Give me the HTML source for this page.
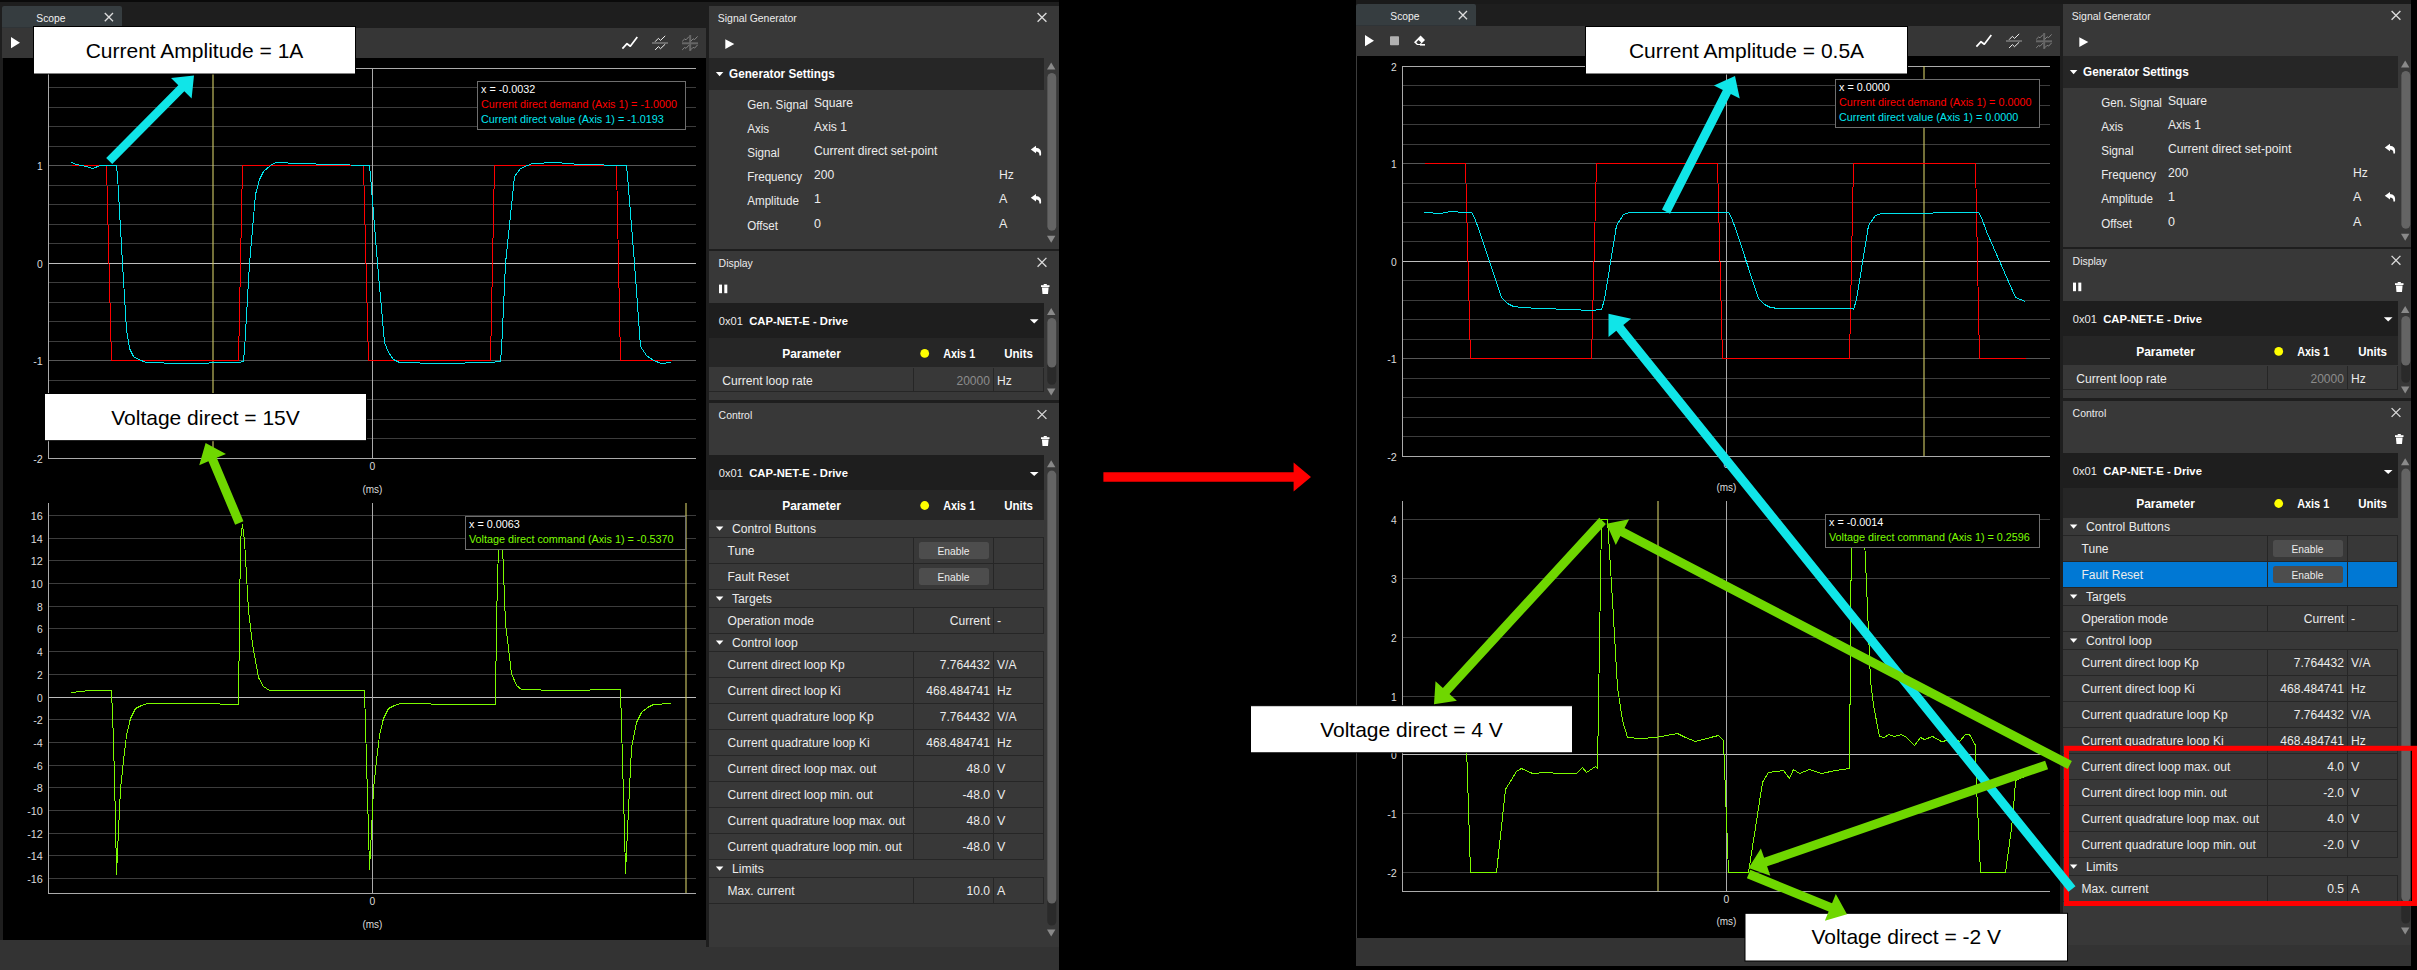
<!DOCTYPE html>
<html><head><meta charset="utf-8"><style>
html,body{margin:0;padding:0;background:#000;overflow:hidden;width:2417px;height:970px;}
svg{display:block;} svg text{font-family:"Liberation Sans", sans-serif;}
</style></head><body>
<svg width="2417" height="970" viewBox="0 0 2417 970">
<rect x="0" y="0" width="2417" height="970" fill="#000"/>
<rect x="0" y="0" width="1059" height="970" fill="#1e1e1e" />
<rect x="0" y="0" width="1059" height="2" fill="#0a0a0a" />
<path d="M2,27.7 L2,8 Q2,6 4,6 L120,6 Q122,6 122,8 L122,27.7 Z" fill="#363d40"/>
<text x="36.3" y="22" font-size="11.2" fill="#f0f0f0" textLength="29.18" lengthAdjust="spacingAndGlyphs" >Scope</text>
<line x1="104.8" y1="13" x2="113" y2="21.2" stroke="#dcdcdc" stroke-width="1.3" />
<line x1="113" y1="13" x2="104.8" y2="21.2" stroke="#dcdcdc" stroke-width="1.3" />
<rect x="2" y="28" width="704" height="30" fill="#363636" />
<polygon points="11,37 20,42.65 11,48.3" fill="#ffffff" />
<polyline points="622.4,48.7 627,43.7 630.3,46.2 637.3,36.9" fill="none" stroke="#ffffff" stroke-width="1.7" stroke-linejoin="round" />
<rect x="652" y="42" width="16" height="2" fill="#6a6a6a" />
<polyline points="655.1,41.7 658.4,38.3 660.5,40.4 665.2,35.9" fill="none" stroke="#f0f0f0" stroke-width="1.0" stroke-linejoin="round" />
<polyline points="655.1,50 658.4,46.6 660.5,48.7 665.2,44.2" fill="none" stroke="#f0f0f0" stroke-width="1.0" stroke-linejoin="round" />
<rect x="682" y="42.3" width="16" height="2" fill="#666666" />
<rect x="689.2" y="35" width="2" height="16" fill="#666666" />
<polyline points="682.2,41.4 684.6,39 686,39.8 689,36.6" fill="none" stroke="#8c8c8c" stroke-width="0.9" stroke-linejoin="round" />
<polyline points="690.8,41.2 693.2,38.8 694.6,39.6 697.6,36.4" fill="none" stroke="#8c8c8c" stroke-width="0.9" stroke-linejoin="round" />
<polyline points="682.2,49.9 684.6,47.5 686,48.3 689,45.1" fill="none" stroke="#8c8c8c" stroke-width="0.9" stroke-linejoin="round" />
<polyline points="690.8,49.7 693.2,47.3 694.6,48.1 697.6,44.9" fill="none" stroke="#8c8c8c" stroke-width="0.9" stroke-linejoin="round" />
<rect x="3" y="58" width="703" height="882" fill="#000000" />
<rect x="0" y="940" width="706" height="30" fill="#333333" />
<rect x="706" y="947" width="353" height="23" fill="#333333" />
<line x1="48" y1="458.5" x2="696" y2="458.5" stroke="#aaaaaa" stroke-width="1" shape-rendering="crispEdges"/>
<line x1="48" y1="438.5" x2="696" y2="438.5" stroke="#3c3c3c" stroke-width="1" shape-rendering="crispEdges"/>
<line x1="48" y1="419.5" x2="696" y2="419.5" stroke="#3c3c3c" stroke-width="1" shape-rendering="crispEdges"/>
<line x1="48" y1="399.5" x2="696" y2="399.5" stroke="#3c3c3c" stroke-width="1" shape-rendering="crispEdges"/>
<line x1="48" y1="380.5" x2="696" y2="380.5" stroke="#3c3c3c" stroke-width="1" shape-rendering="crispEdges"/>
<line x1="48" y1="360.5" x2="696" y2="360.5" stroke="#575757" stroke-width="1" shape-rendering="crispEdges"/>
<line x1="48" y1="341.5" x2="696" y2="341.5" stroke="#3c3c3c" stroke-width="1" shape-rendering="crispEdges"/>
<line x1="48" y1="321.5" x2="696" y2="321.5" stroke="#3c3c3c" stroke-width="1" shape-rendering="crispEdges"/>
<line x1="48" y1="302.5" x2="696" y2="302.5" stroke="#3c3c3c" stroke-width="1" shape-rendering="crispEdges"/>
<line x1="48" y1="282.5" x2="696" y2="282.5" stroke="#3c3c3c" stroke-width="1" shape-rendering="crispEdges"/>
<line x1="48" y1="263.5" x2="696" y2="263.5" stroke="#bdbdbd" stroke-width="1" shape-rendering="crispEdges"/>
<line x1="48" y1="243.5" x2="696" y2="243.5" stroke="#3c3c3c" stroke-width="1" shape-rendering="crispEdges"/>
<line x1="48" y1="224.5" x2="696" y2="224.5" stroke="#3c3c3c" stroke-width="1" shape-rendering="crispEdges"/>
<line x1="48" y1="204.5" x2="696" y2="204.5" stroke="#3c3c3c" stroke-width="1" shape-rendering="crispEdges"/>
<line x1="48" y1="185.5" x2="696" y2="185.5" stroke="#3c3c3c" stroke-width="1" shape-rendering="crispEdges"/>
<line x1="48" y1="165.5" x2="696" y2="165.5" stroke="#575757" stroke-width="1" shape-rendering="crispEdges"/>
<line x1="48" y1="146.5" x2="696" y2="146.5" stroke="#3c3c3c" stroke-width="1" shape-rendering="crispEdges"/>
<line x1="48" y1="126.5" x2="696" y2="126.5" stroke="#3c3c3c" stroke-width="1" shape-rendering="crispEdges"/>
<line x1="48" y1="107.5" x2="696" y2="107.5" stroke="#3c3c3c" stroke-width="1" shape-rendering="crispEdges"/>
<line x1="48" y1="87.5" x2="696" y2="87.5" stroke="#3c3c3c" stroke-width="1" shape-rendering="crispEdges"/>
<line x1="48" y1="68.5" x2="696" y2="68.5" stroke="#aaaaaa" stroke-width="1" shape-rendering="crispEdges"/>
<line x1="48.5" y1="68" x2="48.5" y2="459" stroke="#aaaaaa" stroke-width="1" shape-rendering="crispEdges"/>
<line x1="372.5" y1="68" x2="372.5" y2="458" stroke="#aaaaaa" stroke-width="1" shape-rendering="crispEdges"/>
<rect x="212" y="68" width="2" height="390" fill="rgba(211,205,103,0.545)"/>
<text x="42.8" y="73" font-size="10.3" fill="#dcdcdc" text-anchor="end" >2</text>
<text x="42.8" y="170" font-size="10.3" fill="#dcdcdc" text-anchor="end" >1</text>
<text x="42.8" y="268" font-size="10.3" fill="#dcdcdc" text-anchor="end" >0</text>
<text x="42.8" y="365" font-size="10.3" fill="#dcdcdc" text-anchor="end" textLength="9.61" lengthAdjust="spacingAndGlyphs" >-1</text>
<text x="42.8" y="463" font-size="10.3" fill="#dcdcdc" text-anchor="end" textLength="9.61" lengthAdjust="spacingAndGlyphs" >-2</text>
<text x="372.4" y="470" font-size="10.3" fill="#dcdcdc" text-anchor="middle" >0</text>
<text x="372.4" y="493" font-size="10.3" fill="#dcdcdc" text-anchor="middle" textLength="19.96" lengthAdjust="spacingAndGlyphs" >(ms)</text>
<polyline points="71.5,165.5 106.5,165.5 111.5,360.5 238.5,360.5 242.5,165.5 363.5,165.5 368.5,360.5 490.5,360.5 494.5,165.5 616.5,165.5 620.5,360.5 671.5,360.5" fill="none" stroke="#ff0000" stroke-width="1" shape-rendering="crispEdges"/>
<polyline points="71.5,162.5 76.5,164.5 86.5,166.5 92.5,168.5 100.5,165.5 116.5,165.5 116.5,165.5 117.5,175.5 122.5,263.5 126.5,329.5 129.5,348.5 133.5,356.5 138.5,359.5 146.5,362.5 180.5,363.5 238.5,362.5 243.5,361.5 243.5,360.5 244.5,350.5 249.5,263.5 255.5,194.5 259.5,179.5 263.5,171.5 270.5,165.5 275.5,162.5 300.5,163.5 330.5,164.5 369.5,165.5 369.5,165.5 370.5,175.5 377.5,263.5 384.5,342.5 388.5,352.5 393.5,359.5 399.5,362.5 440.5,363.5 490.5,362.5 500.5,361.5 500.5,360.5 501.5,350.5 505.5,263.5 514.5,176.5 520.5,168.5 527.5,165.5 532.5,163.5 555.5,162.5 580.5,164.5 626.5,165.5 626.5,165.5 627.5,175.5 634.5,263.5 640.5,346.5 646.5,355.5 653.5,360.5 661.5,363.5 671.5,362.5" fill="none" stroke="#00e5ee" stroke-width="1" shape-rendering="crispEdges"/>
<rect x="477.5" y="81.5" width="208" height="48" fill="#000" stroke="#6e6e6e" stroke-width="1"/>
<text x="481" y="93" font-size="10.2" fill="#ffffff" textLength="54.36" lengthAdjust="spacingAndGlyphs" >x = -0.0032</text>
<text x="481" y="108" font-size="10.2" fill="#ff0000" textLength="196.05" lengthAdjust="spacingAndGlyphs" >Current direct demand (Axis 1) = -1.0000</text>
<text x="481" y="123" font-size="10.2" fill="#00e5ee" textLength="182.83" lengthAdjust="spacingAndGlyphs" >Current direct value (Axis 1) = -1.0193</text>
<line x1="48" y1="515.5" x2="696" y2="515.5" stroke="#3c3c3c" stroke-width="1" shape-rendering="crispEdges"/>
<text x="42.8" y="520" font-size="10.3" fill="#dcdcdc" text-anchor="end" textLength="12.04" lengthAdjust="spacingAndGlyphs" >16</text>
<line x1="48" y1="538.5" x2="696" y2="538.5" stroke="#3c3c3c" stroke-width="1" shape-rendering="crispEdges"/>
<text x="42.8" y="543" font-size="10.3" fill="#dcdcdc" text-anchor="end" textLength="12.04" lengthAdjust="spacingAndGlyphs" >14</text>
<line x1="48" y1="560.5" x2="696" y2="560.5" stroke="#3c3c3c" stroke-width="1" shape-rendering="crispEdges"/>
<text x="42.8" y="565" font-size="10.3" fill="#dcdcdc" text-anchor="end" textLength="12.04" lengthAdjust="spacingAndGlyphs" >12</text>
<line x1="48" y1="583.5" x2="696" y2="583.5" stroke="#3c3c3c" stroke-width="1" shape-rendering="crispEdges"/>
<text x="42.8" y="588" font-size="10.3" fill="#dcdcdc" text-anchor="end" textLength="12.04" lengthAdjust="spacingAndGlyphs" >10</text>
<line x1="48" y1="606.5" x2="696" y2="606.5" stroke="#3c3c3c" stroke-width="1" shape-rendering="crispEdges"/>
<text x="42.8" y="611" font-size="10.3" fill="#dcdcdc" text-anchor="end" >8</text>
<line x1="48" y1="628.5" x2="696" y2="628.5" stroke="#3c3c3c" stroke-width="1" shape-rendering="crispEdges"/>
<text x="42.8" y="633" font-size="10.3" fill="#dcdcdc" text-anchor="end" >6</text>
<line x1="48" y1="651.5" x2="696" y2="651.5" stroke="#3c3c3c" stroke-width="1" shape-rendering="crispEdges"/>
<text x="42.8" y="656" font-size="10.3" fill="#dcdcdc" text-anchor="end" >4</text>
<line x1="48" y1="674.5" x2="696" y2="674.5" stroke="#3c3c3c" stroke-width="1" shape-rendering="crispEdges"/>
<text x="42.8" y="679" font-size="10.3" fill="#dcdcdc" text-anchor="end" >2</text>
<line x1="48" y1="697.5" x2="696" y2="697.5" stroke="#bdbdbd" stroke-width="1" shape-rendering="crispEdges"/>
<text x="42.8" y="702" font-size="10.3" fill="#dcdcdc" text-anchor="end" >0</text>
<line x1="48" y1="719.5" x2="696" y2="719.5" stroke="#3c3c3c" stroke-width="1" shape-rendering="crispEdges"/>
<text x="42.8" y="724" font-size="10.3" fill="#dcdcdc" text-anchor="end" textLength="9.61" lengthAdjust="spacingAndGlyphs" >-2</text>
<line x1="48" y1="742.5" x2="696" y2="742.5" stroke="#3c3c3c" stroke-width="1" shape-rendering="crispEdges"/>
<text x="42.8" y="747" font-size="10.3" fill="#dcdcdc" text-anchor="end" textLength="9.61" lengthAdjust="spacingAndGlyphs" >-4</text>
<line x1="48" y1="765.5" x2="696" y2="765.5" stroke="#3c3c3c" stroke-width="1" shape-rendering="crispEdges"/>
<text x="42.8" y="770" font-size="10.3" fill="#dcdcdc" text-anchor="end" textLength="9.61" lengthAdjust="spacingAndGlyphs" >-6</text>
<line x1="48" y1="787.5" x2="696" y2="787.5" stroke="#3c3c3c" stroke-width="1" shape-rendering="crispEdges"/>
<text x="42.8" y="792" font-size="10.3" fill="#dcdcdc" text-anchor="end" textLength="9.61" lengthAdjust="spacingAndGlyphs" >-8</text>
<line x1="48" y1="810.5" x2="696" y2="810.5" stroke="#3c3c3c" stroke-width="1" shape-rendering="crispEdges"/>
<text x="42.8" y="815" font-size="10.3" fill="#dcdcdc" text-anchor="end" textLength="15.64" lengthAdjust="spacingAndGlyphs" >-10</text>
<line x1="48" y1="833.5" x2="696" y2="833.5" stroke="#3c3c3c" stroke-width="1" shape-rendering="crispEdges"/>
<text x="42.8" y="838" font-size="10.3" fill="#dcdcdc" text-anchor="end" textLength="15.64" lengthAdjust="spacingAndGlyphs" >-12</text>
<line x1="48" y1="855.5" x2="696" y2="855.5" stroke="#3c3c3c" stroke-width="1" shape-rendering="crispEdges"/>
<text x="42.8" y="860" font-size="10.3" fill="#dcdcdc" text-anchor="end" textLength="15.64" lengthAdjust="spacingAndGlyphs" >-14</text>
<line x1="48" y1="878.5" x2="696" y2="878.5" stroke="#3c3c3c" stroke-width="1" shape-rendering="crispEdges"/>
<text x="42.8" y="883" font-size="10.3" fill="#dcdcdc" text-anchor="end" textLength="15.64" lengthAdjust="spacingAndGlyphs" >-16</text>
<line x1="48.5" y1="503" x2="48.5" y2="894" stroke="#aaaaaa" stroke-width="1" shape-rendering="crispEdges"/>
<line x1="48" y1="893.5" x2="696" y2="893.5" stroke="#aaaaaa" stroke-width="1" shape-rendering="crispEdges"/>
<line x1="372.5" y1="503" x2="372.5" y2="893" stroke="#aaaaaa" stroke-width="1" shape-rendering="crispEdges"/>
<rect x="685" y="503" width="2" height="390" fill="rgba(211,205,103,0.545)"/>
<text x="372.4" y="905.4" font-size="10.3" fill="#dcdcdc" text-anchor="middle" >0</text>
<text x="372.4" y="928" font-size="10.3" fill="#dcdcdc" text-anchor="middle" textLength="19.96" lengthAdjust="spacingAndGlyphs" >(ms)</text>
<polyline points="71.5,692.5 80.5,691.5 89.5,690.5 111.5,690.5 113.5,740.5 115.5,820.5 116.5,874.5 118.5,830.5 120.5,789.5 123.5,760.5 126.5,735.5 130.5,718.5 135.5,708.5 141.5,705.5 147.5,703.5 200.5,703.5 238.5,704.5 239.5,620.5 240.5,540.5 242.5,524.5 244.5,540.5 248.5,610.5 252.5,644.5 258.5,677.5 263.5,686.5 269.5,690.5 300.5,690.5 364.5,690.5 366.5,760.5 368.5,830.5 369.5,869.5 371.5,830.5 373.5,789.5 376.5,760.5 379.5,735.5 383.5,718.5 388.5,708.5 394.5,705.5 400.5,703.5 460.5,704.5 495.5,704.5 496.5,620.5 498.5,545.5 500.5,528.5 502.5,545.5 505.5,623.5 511.5,673.5 516.5,685.5 521.5,689.5 560.5,690.5 620.5,689.5 622.5,760.5 624.5,830.5 625.5,873.5 627.5,830.5 631.5,747.5 636.5,722.5 641.5,712.5 647.5,707.5 653.5,704.5 671.5,703.5" fill="none" stroke="#7cfc00" stroke-width="1" shape-rendering="crispEdges"/>
<rect x="465.5" y="516.5" width="220" height="33" fill="#000" stroke="#6e6e6e" stroke-width="1"/>
<text x="469" y="528" font-size="10.2" fill="#ffffff" textLength="50.76" lengthAdjust="spacingAndGlyphs" >x = 0.0063</text>
<text x="469" y="543" font-size="10.2" fill="#7cfc00" textLength="204.46" lengthAdjust="spacingAndGlyphs" >Voltage direct command (Axis 1) = -0.5370</text>
<rect x="709" y="6" width="350" height="243" fill="#383838" />
<text x="717.8" y="22" font-size="10.8" fill="#ececec" textLength="78.90" lengthAdjust="spacingAndGlyphs" >Signal Generator</text>
<line x1="1037.6" y1="13" x2="1046.4" y2="21.8" stroke="#dcdcdc" stroke-width="1.3" />
<line x1="1046.4" y1="13" x2="1037.6" y2="21.8" stroke="#dcdcdc" stroke-width="1.3" />
<polygon points="725.3,39.2 734.3,44.1 725.3,49" fill="#ffffff" />
<rect x="709" y="58" width="335" height="32" fill="#262626" />
<polygon points="715.85,72.1 723.35,72.1 719.6,76.3" fill="#ffffff" />
<text x="729" y="78" font-size="12.3" fill="#ffffff" font-weight="bold" textLength="105.75" lengthAdjust="spacingAndGlyphs" >Generator Settings</text>
<text x="747.2" y="109" font-size="12.5" fill="#ececec" textLength="60.76" lengthAdjust="spacingAndGlyphs" >Gen. Signal</text>
<text x="814" y="107" font-size="12.5" fill="#ececec" textLength="39.10" lengthAdjust="spacingAndGlyphs" >Square</text>
<text x="747.2" y="133.1" font-size="12.5" fill="#ececec" textLength="21.97" lengthAdjust="spacingAndGlyphs" >Axis</text>
<text x="814" y="131.1" font-size="12.5" fill="#ececec" textLength="33.03" lengthAdjust="spacingAndGlyphs" >Axis 1</text>
<text x="747.2" y="157.2" font-size="12.5" fill="#ececec" textLength="32.33" lengthAdjust="spacingAndGlyphs" >Signal</text>
<text x="814" y="155.2" font-size="12.5" fill="#ececec" textLength="123.30" lengthAdjust="spacingAndGlyphs" >Current direct set-point</text>
<polygon points="1030.8,149.5 1036,145.8 1036,153.2" fill="#ffffff" />
<path d="M1035.6,147.8 C1040,147.8 1041.8,150.6 1041,155.4 L1039.4,155.4 C1039.7,152.8 1038.4,151.4 1035.6,151.4 Z" fill="#ffffff"/>
<text x="747.2" y="181.3" font-size="12.5" fill="#ececec" textLength="54.93" lengthAdjust="spacingAndGlyphs" >Frequency</text>
<text x="814" y="179.3" font-size="12.5" fill="#ececec" textLength="20.23" lengthAdjust="spacingAndGlyphs" >200</text>
<text x="999" y="179.3" font-size="12.5" fill="#ececec" textLength="14.82" lengthAdjust="spacingAndGlyphs" >Hz</text>
<text x="747.2" y="205.4" font-size="12.5" fill="#ececec" textLength="51.70" lengthAdjust="spacingAndGlyphs" >Amplitude</text>
<text x="814" y="203.4" font-size="12.5" fill="#ececec" >1</text>
<text x="999" y="203.4" font-size="12.5" fill="#ececec" >A</text>
<polygon points="1030.8,197.7 1036,194 1036,201.4" fill="#ffffff" />
<path d="M1035.6,196 C1040,196 1041.8,198.8 1041,203.6 L1039.4,203.6 C1039.7,201 1038.4,199.6 1035.6,199.6 Z" fill="#ffffff"/>
<text x="747.2" y="229.5" font-size="12.5" fill="#ececec" textLength="30.79" lengthAdjust="spacingAndGlyphs" >Offset</text>
<text x="814" y="227.5" font-size="12.5" fill="#ececec" >0</text>
<text x="999" y="227.5" font-size="12.5" fill="#ececec" >A</text>
<polygon points="1047,69.4 1051.2,62.4 1055.4,69.4" fill="#8a8a8a" />
<rect x="1047.3" y="73" width="9" height="157.7" fill="#2a2a2a" rx="4.5"/>
<rect x="1047.3" y="73" width="9" height="157.7" fill="#646464" rx="4.5"/>
<polygon points="1047,235.8 1055.4,235.8 1051.2,242.8" fill="#8a8a8a" />
<rect x="709" y="251" width="350" height="149" fill="#383838" />
<text x="718.6" y="267.2" font-size="10.8" fill="#ececec" textLength="34.25" lengthAdjust="spacingAndGlyphs" >Display</text>
<line x1="1037.6" y1="257.9" x2="1046.4" y2="266.7" stroke="#dcdcdc" stroke-width="1.3" />
<line x1="1046.4" y1="257.9" x2="1037.6" y2="266.7" stroke="#dcdcdc" stroke-width="1.3" />
<rect x="719" y="284.6" width="3" height="8.6" fill="#ffffff" />
<rect x="724.3" y="284.6" width="3" height="8.6" fill="#ffffff" />
<rect x="1041" y="285.2" width="8.5" height="1.8" fill="#ffffff" />
<rect x="1043.7" y="284" width="3.1" height="1.6" fill="#ffffff" />
<polygon points="1041.9,287.6 1048.6,287.6 1048,294 1042.5,294" fill="#ffffff" />
<rect x="709" y="303" width="335" height="35" fill="#1e1e1e" />
<text x="718.8" y="324.5" font-size="11.3" fill="#ececec" textLength="24.01" lengthAdjust="spacingAndGlyphs" >0x01</text>
<text x="749.2" y="324.5" font-size="11.3" fill="#ffffff" font-weight="bold" textLength="98.70" lengthAdjust="spacingAndGlyphs" >CAP-NET-E - Drive</text>
<polygon points="1029.85,319.3 1038.55,319.3 1034.2,323.5" fill="#ffffff" />
<rect x="709" y="338" width="335" height="29" fill="#262626" />
<text x="811.5" y="358" font-size="12" fill="#ffffff" font-weight="bold" text-anchor="middle" textLength="58.70" lengthAdjust="spacingAndGlyphs" >Parameter</text>
<circle cx="924.7" cy="353.4" r="4.4" fill="#ffff00"/>
<text x="943.2" y="358" font-size="12" fill="#ffffff" font-weight="bold" textLength="32.00" lengthAdjust="spacingAndGlyphs" >Axis 1</text>
<text x="1004.3" y="358" font-size="12" fill="#ffffff" font-weight="bold" textLength="28.70" lengthAdjust="spacingAndGlyphs" >Units</text>
<rect x="709" y="368" width="335" height="24" fill="#262626" />
<rect x="709" y="368" width="204" height="23" fill="#383838" />
<rect x="914" y="368" width="79" height="23" fill="#383838" />
<rect x="994" y="368" width="49" height="23" fill="#383838" />
<text x="722.3" y="385" font-size="12.5" fill="#ececec" textLength="90.50" lengthAdjust="spacingAndGlyphs" >Current loop rate</text>
<text x="990" y="385" font-size="12.5" fill="#8c8c8c" text-anchor="end" textLength="33.55" lengthAdjust="spacingAndGlyphs" >20000</text>
<text x="997" y="385" font-size="12.5" fill="#ececec" textLength="14.75" lengthAdjust="spacingAndGlyphs" >Hz</text>
<polygon points="1047,315 1051.2,308 1055.4,315" fill="#8a8a8a" />
<rect x="1047.3" y="318" width="9" height="66.8" fill="#2a2a2a" rx="4.5"/>
<rect x="1047.3" y="318" width="9" height="49.5" fill="#646464" rx="4.5"/>
<polygon points="1047,388.5 1055.4,388.5 1051.2,395.5" fill="#8a8a8a" />
<rect x="709" y="403" width="350" height="544" fill="#383838" />
<text x="718.6" y="419.4" font-size="10.8" fill="#ececec" textLength="33.65" lengthAdjust="spacingAndGlyphs" >Control</text>
<line x1="1037.6" y1="410.1" x2="1046.4" y2="418.9" stroke="#dcdcdc" stroke-width="1.3" />
<line x1="1046.4" y1="410.1" x2="1037.6" y2="418.9" stroke="#dcdcdc" stroke-width="1.3" />
<rect x="1041" y="437.2" width="8.5" height="1.8" fill="#ffffff" />
<rect x="1043.7" y="436" width="3.1" height="1.6" fill="#ffffff" />
<polygon points="1041.9,439.6 1048.6,439.6 1048,446 1042.5,446" fill="#ffffff" />
<rect x="709" y="455" width="335" height="35" fill="#1e1e1e" />
<text x="718.8" y="477.1" font-size="11.3" fill="#ececec" textLength="24.01" lengthAdjust="spacingAndGlyphs" >0x01</text>
<text x="749.2" y="477.1" font-size="11.3" fill="#ffffff" font-weight="bold" textLength="98.70" lengthAdjust="spacingAndGlyphs" >CAP-NET-E - Drive</text>
<polygon points="1029.85,471.9 1038.55,471.9 1034.2,476.1" fill="#ffffff" />
<rect x="709" y="490" width="335" height="30" fill="#262626" />
<text x="811.5" y="510.1" font-size="12" fill="#ffffff" font-weight="bold" text-anchor="middle" textLength="58.70" lengthAdjust="spacingAndGlyphs" >Parameter</text>
<circle cx="924.7" cy="505.5" r="4.4" fill="#ffff00"/>
<text x="943.2" y="510.1" font-size="12" fill="#ffffff" font-weight="bold" textLength="32.00" lengthAdjust="spacingAndGlyphs" >Axis 1</text>
<text x="1004.3" y="510.1" font-size="12" fill="#ffffff" font-weight="bold" textLength="28.70" lengthAdjust="spacingAndGlyphs" >Units</text>
<rect x="709" y="520" width="335" height="18" fill="#262626" />
<rect x="709" y="520" width="335" height="17" fill="#383838" />
<polygon points="715.85,526.5 723.35,526.5 719.6,530.7" fill="#ffffff" />
<text x="732" y="533" font-size="12.5" fill="#ececec" textLength="84.00" lengthAdjust="spacingAndGlyphs" >Control Buttons</text>
<rect x="709" y="538" width="335" height="26" fill="#262626" />
<rect x="709" y="538" width="204" height="25" fill="#383838" />
<rect x="914" y="538" width="79" height="25" fill="#383838" />
<rect x="994" y="538" width="49" height="25" fill="#383838" />
<text x="727.5" y="555" font-size="12.5" fill="#ececec" textLength="27.05" lengthAdjust="spacingAndGlyphs" >Tune</text>
<rect x="919" y="542" width="70" height="17" fill="#4d4d4d" rx="2.5"/>
<text x="953.5" y="554.5" font-size="10.8" fill="#ececec" text-anchor="middle" textLength="31.93" lengthAdjust="spacingAndGlyphs" >Enable</text>
<rect x="709" y="564" width="335" height="26" fill="#262626" />
<rect x="709" y="564" width="204" height="25" fill="#383838" />
<rect x="914" y="564" width="79" height="25" fill="#383838" />
<rect x="994" y="564" width="49" height="25" fill="#383838" />
<text x="727.5" y="581" font-size="12.5" fill="#ececec" textLength="61.68" lengthAdjust="spacingAndGlyphs" >Fault Reset</text>
<rect x="919" y="568" width="70" height="17" fill="#4d4d4d" rx="2.5"/>
<text x="953.5" y="580.5" font-size="10.8" fill="#ececec" text-anchor="middle" textLength="31.93" lengthAdjust="spacingAndGlyphs" >Enable</text>
<rect x="709" y="590" width="335" height="18" fill="#262626" />
<rect x="709" y="590" width="335" height="17" fill="#383838" />
<polygon points="715.85,596.5 723.35,596.5 719.6,600.7" fill="#ffffff" />
<text x="732" y="603" font-size="12.5" fill="#ececec" textLength="39.96" lengthAdjust="spacingAndGlyphs" >Targets</text>
<rect x="709" y="608" width="335" height="26" fill="#262626" />
<rect x="709" y="608" width="204" height="25" fill="#383838" />
<rect x="914" y="608" width="79" height="25" fill="#383838" />
<rect x="994" y="608" width="49" height="25" fill="#383838" />
<text x="727.5" y="625" font-size="12.5" fill="#ececec" textLength="86.49" lengthAdjust="spacingAndGlyphs" >Operation mode</text>
<text x="990" y="625" font-size="12.5" fill="#ececec" text-anchor="end" textLength="40.21" lengthAdjust="spacingAndGlyphs" >Current</text>
<text x="997" y="625" font-size="12.5" fill="#ececec" >-</text>
<rect x="709" y="634" width="335" height="18" fill="#262626" />
<rect x="709" y="634" width="335" height="17" fill="#383838" />
<polygon points="715.85,640.5 723.35,640.5 719.6,644.7" fill="#ffffff" />
<text x="732" y="647" font-size="12.5" fill="#ececec" textLength="65.72" lengthAdjust="spacingAndGlyphs" >Control loop</text>
<rect x="709" y="652" width="335" height="26" fill="#262626" />
<rect x="709" y="652" width="204" height="25" fill="#383838" />
<rect x="914" y="652" width="79" height="25" fill="#383838" />
<rect x="994" y="652" width="49" height="25" fill="#383838" />
<text x="727.5" y="669" font-size="12.5" fill="#ececec" textLength="117.32" lengthAdjust="spacingAndGlyphs" >Current direct loop Kp</text>
<text x="990" y="669" font-size="12.5" fill="#ececec" text-anchor="end" textLength="50.32" lengthAdjust="spacingAndGlyphs" >7.764432</text>
<text x="997" y="669" font-size="12.5" fill="#ececec" textLength="19.45" lengthAdjust="spacingAndGlyphs" >V/A</text>
<rect x="709" y="678" width="335" height="26" fill="#262626" />
<rect x="709" y="678" width="204" height="25" fill="#383838" />
<rect x="914" y="678" width="79" height="25" fill="#383838" />
<rect x="994" y="678" width="49" height="25" fill="#383838" />
<text x="727.5" y="695" font-size="12.5" fill="#ececec" textLength="113.30" lengthAdjust="spacingAndGlyphs" >Current direct loop Ki</text>
<text x="990" y="695" font-size="12.5" fill="#ececec" text-anchor="end" textLength="63.74" lengthAdjust="spacingAndGlyphs" >468.484741</text>
<text x="997" y="695" font-size="12.5" fill="#ececec" textLength="14.75" lengthAdjust="spacingAndGlyphs" >Hz</text>
<rect x="709" y="704" width="335" height="26" fill="#262626" />
<rect x="709" y="704" width="204" height="25" fill="#383838" />
<rect x="914" y="704" width="79" height="25" fill="#383838" />
<rect x="994" y="704" width="49" height="25" fill="#383838" />
<text x="727.5" y="721" font-size="12.5" fill="#ececec" textLength="146.17" lengthAdjust="spacingAndGlyphs" >Current quadrature loop Kp</text>
<text x="990" y="721" font-size="12.5" fill="#ececec" text-anchor="end" textLength="50.32" lengthAdjust="spacingAndGlyphs" >7.764432</text>
<text x="997" y="721" font-size="12.5" fill="#ececec" textLength="19.45" lengthAdjust="spacingAndGlyphs" >V/A</text>
<rect x="709" y="730" width="335" height="26" fill="#262626" />
<rect x="709" y="730" width="204" height="25" fill="#383838" />
<rect x="914" y="730" width="79" height="25" fill="#383838" />
<rect x="994" y="730" width="49" height="25" fill="#383838" />
<text x="727.5" y="747" font-size="12.5" fill="#ececec" textLength="142.14" lengthAdjust="spacingAndGlyphs" >Current quadrature loop Ki</text>
<text x="990" y="747" font-size="12.5" fill="#ececec" text-anchor="end" textLength="63.74" lengthAdjust="spacingAndGlyphs" >468.484741</text>
<text x="997" y="747" font-size="12.5" fill="#ececec" textLength="14.75" lengthAdjust="spacingAndGlyphs" >Hz</text>
<rect x="709" y="756" width="335" height="26" fill="#262626" />
<rect x="709" y="756" width="204" height="25" fill="#383838" />
<rect x="914" y="756" width="79" height="25" fill="#383838" />
<rect x="994" y="756" width="49" height="25" fill="#383838" />
<text x="727.5" y="773" font-size="12.5" fill="#ececec" textLength="148.81" lengthAdjust="spacingAndGlyphs" >Current direct loop max. out</text>
<text x="990" y="773" font-size="12.5" fill="#ececec" text-anchor="end" textLength="23.48" lengthAdjust="spacingAndGlyphs" >48.0</text>
<text x="997" y="773" font-size="12.5" fill="#ececec" >V</text>
<rect x="709" y="782" width="335" height="26" fill="#262626" />
<rect x="709" y="782" width="204" height="25" fill="#383838" />
<rect x="914" y="782" width="79" height="25" fill="#383838" />
<rect x="994" y="782" width="49" height="25" fill="#383838" />
<text x="727.5" y="799" font-size="12.5" fill="#ececec" textLength="145.46" lengthAdjust="spacingAndGlyphs" >Current direct loop min. out</text>
<text x="990" y="799" font-size="12.5" fill="#ececec" text-anchor="end" textLength="27.49" lengthAdjust="spacingAndGlyphs" >-48.0</text>
<text x="997" y="799" font-size="12.5" fill="#ececec" >V</text>
<rect x="709" y="808" width="335" height="26" fill="#262626" />
<rect x="709" y="808" width="204" height="25" fill="#383838" />
<rect x="914" y="808" width="79" height="25" fill="#383838" />
<rect x="994" y="808" width="49" height="25" fill="#383838" />
<text x="727.5" y="825" font-size="12.5" fill="#ececec" textLength="177.65" lengthAdjust="spacingAndGlyphs" >Current quadrature loop max. out</text>
<text x="990" y="825" font-size="12.5" fill="#ececec" text-anchor="end" textLength="23.48" lengthAdjust="spacingAndGlyphs" >48.0</text>
<text x="997" y="825" font-size="12.5" fill="#ececec" >V</text>
<rect x="709" y="834" width="335" height="26" fill="#262626" />
<rect x="709" y="834" width="204" height="25" fill="#383838" />
<rect x="914" y="834" width="79" height="25" fill="#383838" />
<rect x="994" y="834" width="49" height="25" fill="#383838" />
<text x="727.5" y="851" font-size="12.5" fill="#ececec" textLength="174.30" lengthAdjust="spacingAndGlyphs" >Current quadrature loop min. out</text>
<text x="990" y="851" font-size="12.5" fill="#ececec" text-anchor="end" textLength="27.49" lengthAdjust="spacingAndGlyphs" >-48.0</text>
<text x="997" y="851" font-size="12.5" fill="#ececec" >V</text>
<rect x="709" y="860" width="335" height="18" fill="#262626" />
<rect x="709" y="860" width="335" height="17" fill="#383838" />
<polygon points="715.85,866.5 723.35,866.5 719.6,870.7" fill="#ffffff" />
<text x="732" y="873" font-size="12.5" fill="#ececec" textLength="31.82" lengthAdjust="spacingAndGlyphs" >Limits</text>
<rect x="709" y="878" width="335" height="26" fill="#262626" />
<rect x="709" y="878" width="204" height="25" fill="#383838" />
<rect x="914" y="878" width="79" height="25" fill="#383838" />
<rect x="994" y="878" width="49" height="25" fill="#383838" />
<text x="727.5" y="895" font-size="12.5" fill="#ececec" textLength="67.01" lengthAdjust="spacingAndGlyphs" >Max. current</text>
<text x="990" y="895" font-size="12.5" fill="#ececec" text-anchor="end" textLength="23.48" lengthAdjust="spacingAndGlyphs" >10.0</text>
<text x="997" y="895" font-size="12.5" fill="#ececec" >A</text>
<polygon points="1047,467.3 1051.2,460.3 1055.4,467.3" fill="#8a8a8a" />
<rect x="1047.3" y="470.6" width="9" height="455" fill="#2a2a2a" rx="4.5"/>
<rect x="1047.3" y="470.6" width="9" height="433" fill="#646464" rx="4.5"/>
<polygon points="1047,929.6 1055.4,929.6 1051.2,936.6" fill="#8a8a8a" />
<rect x="1356" y="0" width="1055" height="966" fill="#1e1e1e" />
<rect x="1356" y="0" width="1055" height="4" fill="#1a1a1a" />
<path d="M1356,25.7 L1356,6 Q1356,4 1358,4 L1474,4 Q1476,4 1476,6 L1476,25.7 Z" fill="#363d40"/>
<text x="1390.3" y="20" font-size="11.2" fill="#f0f0f0" textLength="29.18" lengthAdjust="spacingAndGlyphs" >Scope</text>
<line x1="1458.8" y1="11" x2="1467" y2="19.2" stroke="#dcdcdc" stroke-width="1.3" />
<line x1="1467" y1="11" x2="1458.8" y2="19.2" stroke="#dcdcdc" stroke-width="1.3" />
<rect x="1356" y="26" width="704" height="30" fill="#363636" />
<polygon points="1365,35 1374,40.65 1365,46.3" fill="#ffffff" />
<rect x="1390" y="36.2" width="9" height="9" fill="#b0b0b0" rx="0.8"/>
<polygon points="1414,42.2 1420.6,35.6 1425,40 1420,45 1417,45" fill="#ffffff" />
<polygon points="1416.3,42.3 1418.6,40 1421.2,42.6 1419.8,44 1417.8,44" fill="#363636" />
<rect x="1420" y="44" width="5" height="1.6" fill="#ffffff" />
<polyline points="1976.4,46.7 1981,41.7 1984.3,44.2 1991.3,34.9" fill="none" stroke="#ffffff" stroke-width="1.7" stroke-linejoin="round" />
<rect x="2006" y="40" width="16" height="2" fill="#6a6a6a" />
<polyline points="2009.1,39.7 2012.4,36.3 2014.5,38.4 2019.2,33.9" fill="none" stroke="#f0f0f0" stroke-width="1.0" stroke-linejoin="round" />
<polyline points="2009.1,48 2012.4,44.6 2014.5,46.7 2019.2,42.2" fill="none" stroke="#f0f0f0" stroke-width="1.0" stroke-linejoin="round" />
<rect x="2036" y="40.3" width="16" height="2" fill="#666666" />
<rect x="2043.2" y="33" width="2" height="16" fill="#666666" />
<polyline points="2036.2,39.4 2038.6,37 2040,37.8 2043,34.6" fill="none" stroke="#8c8c8c" stroke-width="0.9" stroke-linejoin="round" />
<polyline points="2044.8,39.2 2047.2,36.8 2048.6,37.6 2051.6,34.4" fill="none" stroke="#8c8c8c" stroke-width="0.9" stroke-linejoin="round" />
<polyline points="2036.2,47.9 2038.6,45.5 2040,46.3 2043,43.1" fill="none" stroke="#8c8c8c" stroke-width="0.9" stroke-linejoin="round" />
<polyline points="2044.8,47.7 2047.2,45.3 2048.6,46.1 2051.6,42.9" fill="none" stroke="#8c8c8c" stroke-width="0.9" stroke-linejoin="round" />
<rect x="1357" y="56" width="703" height="882" fill="#000000" />
<line x1="1356.5" y1="56" x2="1356.5" y2="938" stroke="#3c3c3c" stroke-width="1" shape-rendering="crispEdges"/>
<rect x="1356" y="938" width="704" height="28" fill="#333333" />
<rect x="2060" y="945" width="351" height="21" fill="#333333" />
<line x1="1402" y1="456.5" x2="2050" y2="456.5" stroke="#aaaaaa" stroke-width="1" shape-rendering="crispEdges"/>
<line x1="1402" y1="436.5" x2="2050" y2="436.5" stroke="#3c3c3c" stroke-width="1" shape-rendering="crispEdges"/>
<line x1="1402" y1="417.5" x2="2050" y2="417.5" stroke="#3c3c3c" stroke-width="1" shape-rendering="crispEdges"/>
<line x1="1402" y1="397.5" x2="2050" y2="397.5" stroke="#3c3c3c" stroke-width="1" shape-rendering="crispEdges"/>
<line x1="1402" y1="378.5" x2="2050" y2="378.5" stroke="#3c3c3c" stroke-width="1" shape-rendering="crispEdges"/>
<line x1="1402" y1="358.5" x2="2050" y2="358.5" stroke="#575757" stroke-width="1" shape-rendering="crispEdges"/>
<line x1="1402" y1="339.5" x2="2050" y2="339.5" stroke="#3c3c3c" stroke-width="1" shape-rendering="crispEdges"/>
<line x1="1402" y1="319.5" x2="2050" y2="319.5" stroke="#3c3c3c" stroke-width="1" shape-rendering="crispEdges"/>
<line x1="1402" y1="300.5" x2="2050" y2="300.5" stroke="#3c3c3c" stroke-width="1" shape-rendering="crispEdges"/>
<line x1="1402" y1="280.5" x2="2050" y2="280.5" stroke="#3c3c3c" stroke-width="1" shape-rendering="crispEdges"/>
<line x1="1402" y1="261.5" x2="2050" y2="261.5" stroke="#bdbdbd" stroke-width="1" shape-rendering="crispEdges"/>
<line x1="1402" y1="241.5" x2="2050" y2="241.5" stroke="#3c3c3c" stroke-width="1" shape-rendering="crispEdges"/>
<line x1="1402" y1="222.5" x2="2050" y2="222.5" stroke="#3c3c3c" stroke-width="1" shape-rendering="crispEdges"/>
<line x1="1402" y1="202.5" x2="2050" y2="202.5" stroke="#3c3c3c" stroke-width="1" shape-rendering="crispEdges"/>
<line x1="1402" y1="183.5" x2="2050" y2="183.5" stroke="#3c3c3c" stroke-width="1" shape-rendering="crispEdges"/>
<line x1="1402" y1="163.5" x2="2050" y2="163.5" stroke="#575757" stroke-width="1" shape-rendering="crispEdges"/>
<line x1="1402" y1="144.5" x2="2050" y2="144.5" stroke="#3c3c3c" stroke-width="1" shape-rendering="crispEdges"/>
<line x1="1402" y1="124.5" x2="2050" y2="124.5" stroke="#3c3c3c" stroke-width="1" shape-rendering="crispEdges"/>
<line x1="1402" y1="105.5" x2="2050" y2="105.5" stroke="#3c3c3c" stroke-width="1" shape-rendering="crispEdges"/>
<line x1="1402" y1="85.5" x2="2050" y2="85.5" stroke="#3c3c3c" stroke-width="1" shape-rendering="crispEdges"/>
<line x1="1402" y1="66.5" x2="2050" y2="66.5" stroke="#aaaaaa" stroke-width="1" shape-rendering="crispEdges"/>
<line x1="1402.5" y1="66" x2="1402.5" y2="457" stroke="#aaaaaa" stroke-width="1" shape-rendering="crispEdges"/>
<line x1="1726.5" y1="66" x2="1726.5" y2="456" stroke="#aaaaaa" stroke-width="1" shape-rendering="crispEdges"/>
<rect x="1923" y="66" width="2" height="390" fill="rgba(211,205,103,0.545)"/>
<text x="1396.8" y="71" font-size="10.3" fill="#dcdcdc" text-anchor="end" >2</text>
<text x="1396.8" y="168" font-size="10.3" fill="#dcdcdc" text-anchor="end" >1</text>
<text x="1396.8" y="266" font-size="10.3" fill="#dcdcdc" text-anchor="end" >0</text>
<text x="1396.8" y="363" font-size="10.3" fill="#dcdcdc" text-anchor="end" textLength="9.61" lengthAdjust="spacingAndGlyphs" >-1</text>
<text x="1396.8" y="461" font-size="10.3" fill="#dcdcdc" text-anchor="end" textLength="9.61" lengthAdjust="spacingAndGlyphs" >-2</text>
<text x="1726.4" y="468" font-size="10.3" fill="#dcdcdc" text-anchor="middle" >0</text>
<text x="1726.4" y="491" font-size="10.3" fill="#dcdcdc" text-anchor="middle" textLength="19.96" lengthAdjust="spacingAndGlyphs" >(ms)</text>
<polyline points="1424.5,163.5 1465.5,163.5 1470.5,358.5 1591.5,358.5 1596.5,163.5 1717.5,163.5 1722.5,358.5 1849.5,358.5 1853.5,163.5 1975.5,163.5 1979.5,358.5 2025.5,358.5" fill="none" stroke="#ff0000" stroke-width="1" shape-rendering="crispEdges"/>
<polyline points="1424.5,212.5 1440.5,213.5 1450.5,211.5 1465.5,212.5 1471.5,212.5 1471.5,212.5 1474.5,217.5 1479.5,231.5 1501.5,297.5 1507.5,303.5 1513.5,306.5 1521.5,307.5 1540.5,308.5 1570.5,309.5 1590.5,310.5 1601.5,309.5 1601.5,309.5 1604.5,299.5 1616.5,225.5 1623.5,214.5 1629.5,212.5 1660.5,212.5 1700.5,212.5 1728.5,212.5 1728.5,212.5 1731.5,217.5 1736.5,231.5 1758.5,298.5 1764.5,304.5 1770.5,307.5 1778.5,308.5 1800.5,308.5 1853.5,308.5 1853.5,309.5 1856.5,299.5 1868.5,225.5 1875.5,215.5 1881.5,213.5 1915.5,213.5 1950.5,212.5 1978.5,212.5 1978.5,212.5 1981.5,217.5 1986.5,231.5 2015.5,297.5 2025.5,301.5" fill="none" stroke="#00e5ee" stroke-width="1" shape-rendering="crispEdges"/>
<rect x="1835.5" y="79.5" width="204" height="48" fill="#000" stroke="#6e6e6e" stroke-width="1"/>
<text x="1839" y="91" font-size="10.2" fill="#ffffff" textLength="50.76" lengthAdjust="spacingAndGlyphs" >x = 0.0000</text>
<text x="1839" y="106" font-size="10.2" fill="#ff0000" textLength="192.46" lengthAdjust="spacingAndGlyphs" >Current direct demand (Axis 1) = 0.0000</text>
<text x="1839" y="121" font-size="10.2" fill="#00e5ee" textLength="179.24" lengthAdjust="spacingAndGlyphs" >Current direct value (Axis 1) = 0.0000</text>
<line x1="1402" y1="519.5" x2="2050" y2="519.5" stroke="#3c3c3c" stroke-width="1" shape-rendering="crispEdges"/>
<text x="1396.8" y="524" font-size="10.3" fill="#dcdcdc" text-anchor="end" >4</text>
<line x1="1402" y1="578.5" x2="2050" y2="578.5" stroke="#3c3c3c" stroke-width="1" shape-rendering="crispEdges"/>
<text x="1396.8" y="583" font-size="10.3" fill="#dcdcdc" text-anchor="end" >3</text>
<line x1="1402" y1="637.5" x2="2050" y2="637.5" stroke="#3c3c3c" stroke-width="1" shape-rendering="crispEdges"/>
<text x="1396.8" y="642" font-size="10.3" fill="#dcdcdc" text-anchor="end" >2</text>
<line x1="1402" y1="696.5" x2="2050" y2="696.5" stroke="#3c3c3c" stroke-width="1" shape-rendering="crispEdges"/>
<text x="1396.8" y="701" font-size="10.3" fill="#dcdcdc" text-anchor="end" >1</text>
<line x1="1402" y1="754.5" x2="2050" y2="754.5" stroke="#bdbdbd" stroke-width="1" shape-rendering="crispEdges"/>
<text x="1396.8" y="759" font-size="10.3" fill="#dcdcdc" text-anchor="end" >0</text>
<line x1="1402" y1="813.5" x2="2050" y2="813.5" stroke="#3c3c3c" stroke-width="1" shape-rendering="crispEdges"/>
<text x="1396.8" y="818" font-size="10.3" fill="#dcdcdc" text-anchor="end" textLength="9.61" lengthAdjust="spacingAndGlyphs" >-1</text>
<line x1="1402" y1="872.5" x2="2050" y2="872.5" stroke="#3c3c3c" stroke-width="1" shape-rendering="crispEdges"/>
<text x="1396.8" y="877" font-size="10.3" fill="#dcdcdc" text-anchor="end" textLength="9.61" lengthAdjust="spacingAndGlyphs" >-2</text>
<line x1="1402.5" y1="501" x2="1402.5" y2="892" stroke="#aaaaaa" stroke-width="1" shape-rendering="crispEdges"/>
<line x1="1402" y1="891.5" x2="2050" y2="891.5" stroke="#aaaaaa" stroke-width="1" shape-rendering="crispEdges"/>
<line x1="1726.5" y1="501" x2="1726.5" y2="891" stroke="#aaaaaa" stroke-width="1" shape-rendering="crispEdges"/>
<rect x="1657" y="501" width="2" height="390" fill="rgba(211,205,103,0.545)"/>
<text x="1726.4" y="903.4" font-size="10.3" fill="#dcdcdc" text-anchor="middle" >0</text>
<text x="1726.4" y="924.9" font-size="10.3" fill="#dcdcdc" text-anchor="middle" textLength="19.96" lengthAdjust="spacingAndGlyphs" >(ms)</text>
<polyline points="1424.5,738.5 1440.5,737.5 1460.5,739.5 1466.5,745.5 1470.5,872.5 1496.5,872.5 1505.5,789.5 1508.5,784.5 1516.5,771.5 1521.5,768.5 1532.5,773.5 1545.5,772.5 1560.5,773.5 1576.5,773.5 1582.5,767.5 1586.5,772.5 1595.5,766.5 1597.5,768.5 1601.5,519.5 1607.5,519.5 1612.5,600.5 1617.5,687.5 1622.5,720.5 1627.5,737.5 1640.5,738.5 1655.5,737.5 1677.5,733.5 1685.5,737.5 1695.5,741.5 1710.5,737.5 1718.5,735.5 1723.5,740.5 1728.5,872.5 1748.5,872.5 1762.5,782.5 1768.5,772.5 1783.5,770.5 1789.5,778.5 1793.5,769.5 1799.5,773.5 1809.5,769.5 1821.5,773.5 1835.5,770.5 1849.5,768.5 1851.5,519.5 1863.5,519.5 1865.5,560.5 1870.5,680.5 1873.5,705.5 1879.5,736.5 1884.5,737.5 1888.5,734.5 1894.5,736.5 1901.5,734.5 1906.5,737.5 1914.5,745.5 1920.5,737.5 1924.5,739.5 1932.5,736.5 1941.5,741.5 1947.5,740.5 1953.5,738.5 1959.5,741.5 1965.5,734.5 1969.5,734.5 1975.5,745.5 1975.5,763.5 1980.5,872.5 2005.5,872.5 2011.5,828.5 2014.5,795.5 2015.5,780.5 2019.5,778.5 2025.5,776.5" fill="none" stroke="#7cfc00" stroke-width="1" shape-rendering="crispEdges"/>
<rect x="1825.5" y="514.5" width="214" height="33" fill="#000" stroke="#6e6e6e" stroke-width="1"/>
<text x="1829" y="526" font-size="10.2" fill="#ffffff" textLength="54.36" lengthAdjust="spacingAndGlyphs" >x = -0.0014</text>
<text x="1829" y="541" font-size="10.2" fill="#7cfc00" textLength="200.87" lengthAdjust="spacingAndGlyphs" >Voltage direct command (Axis 1) = 0.2596</text>
<rect x="2063" y="4" width="348" height="243" fill="#383838" />
<text x="2071.8" y="20" font-size="10.8" fill="#ececec" textLength="78.90" lengthAdjust="spacingAndGlyphs" >Signal Generator</text>
<line x1="2391.6" y1="11" x2="2400.4" y2="19.8" stroke="#dcdcdc" stroke-width="1.3" />
<line x1="2400.4" y1="11" x2="2391.6" y2="19.8" stroke="#dcdcdc" stroke-width="1.3" />
<polygon points="2079.3,37.2 2088.3,42.1 2079.3,47" fill="#ffffff" />
<rect x="2063" y="56" width="335" height="32" fill="#262626" />
<polygon points="2069.85,70.1 2077.35,70.1 2073.6,74.3" fill="#ffffff" />
<text x="2083" y="76" font-size="12.3" fill="#ffffff" font-weight="bold" textLength="105.75" lengthAdjust="spacingAndGlyphs" >Generator Settings</text>
<text x="2101.2" y="107" font-size="12.5" fill="#ececec" textLength="60.76" lengthAdjust="spacingAndGlyphs" >Gen. Signal</text>
<text x="2168" y="105" font-size="12.5" fill="#ececec" textLength="39.10" lengthAdjust="spacingAndGlyphs" >Square</text>
<text x="2101.2" y="131.1" font-size="12.5" fill="#ececec" textLength="21.97" lengthAdjust="spacingAndGlyphs" >Axis</text>
<text x="2168" y="129.1" font-size="12.5" fill="#ececec" textLength="33.03" lengthAdjust="spacingAndGlyphs" >Axis 1</text>
<text x="2101.2" y="155.2" font-size="12.5" fill="#ececec" textLength="32.33" lengthAdjust="spacingAndGlyphs" >Signal</text>
<text x="2168" y="153.2" font-size="12.5" fill="#ececec" textLength="123.30" lengthAdjust="spacingAndGlyphs" >Current direct set-point</text>
<polygon points="2384.8,147.5 2390,143.8 2390,151.2" fill="#ffffff" />
<path d="M2389.6,145.8 C2394,145.8 2395.8,148.6 2395,153.4 L2393.4,153.4 C2393.7,150.8 2392.4,149.4 2389.6,149.4 Z" fill="#ffffff"/>
<text x="2101.2" y="179.3" font-size="12.5" fill="#ececec" textLength="54.93" lengthAdjust="spacingAndGlyphs" >Frequency</text>
<text x="2168" y="177.3" font-size="12.5" fill="#ececec" textLength="20.23" lengthAdjust="spacingAndGlyphs" >200</text>
<text x="2353" y="177.3" font-size="12.5" fill="#ececec" textLength="14.82" lengthAdjust="spacingAndGlyphs" >Hz</text>
<text x="2101.2" y="203.4" font-size="12.5" fill="#ececec" textLength="51.70" lengthAdjust="spacingAndGlyphs" >Amplitude</text>
<text x="2168" y="201.4" font-size="12.5" fill="#ececec" >1</text>
<text x="2353" y="201.4" font-size="12.5" fill="#ececec" >A</text>
<polygon points="2384.8,195.7 2390,192 2390,199.4" fill="#ffffff" />
<path d="M2389.6,194 C2394,194 2395.8,196.8 2395,201.6 L2393.4,201.6 C2393.7,199 2392.4,197.6 2389.6,197.6 Z" fill="#ffffff"/>
<text x="2101.2" y="227.5" font-size="12.5" fill="#ececec" textLength="30.79" lengthAdjust="spacingAndGlyphs" >Offset</text>
<text x="2168" y="225.5" font-size="12.5" fill="#ececec" >0</text>
<text x="2353" y="225.5" font-size="12.5" fill="#ececec" >A</text>
<polygon points="2401,67.4 2405.2,60.4 2409.4,67.4" fill="#8a8a8a" />
<rect x="2401.3" y="71" width="9" height="157.7" fill="#2a2a2a" rx="4.5"/>
<rect x="2401.3" y="71" width="9" height="157.7" fill="#646464" rx="4.5"/>
<polygon points="2401,233.8 2409.4,233.8 2405.2,240.8" fill="#8a8a8a" />
<rect x="2063" y="249" width="348" height="149" fill="#383838" />
<text x="2072.6" y="265.2" font-size="10.8" fill="#ececec" textLength="34.25" lengthAdjust="spacingAndGlyphs" >Display</text>
<line x1="2391.6" y1="255.9" x2="2400.4" y2="264.7" stroke="#dcdcdc" stroke-width="1.3" />
<line x1="2400.4" y1="255.9" x2="2391.6" y2="264.7" stroke="#dcdcdc" stroke-width="1.3" />
<rect x="2073" y="282.6" width="3" height="8.6" fill="#ffffff" />
<rect x="2078.3" y="282.6" width="3" height="8.6" fill="#ffffff" />
<rect x="2395" y="283.2" width="8.5" height="1.8" fill="#ffffff" />
<rect x="2397.7" y="282" width="3.1" height="1.6" fill="#ffffff" />
<polygon points="2395.9,285.6 2402.6,285.6 2402,292 2396.5,292" fill="#ffffff" />
<rect x="2063" y="301" width="335" height="35" fill="#1e1e1e" />
<text x="2072.8" y="322.5" font-size="11.3" fill="#ececec" textLength="24.01" lengthAdjust="spacingAndGlyphs" >0x01</text>
<text x="2103.2" y="322.5" font-size="11.3" fill="#ffffff" font-weight="bold" textLength="98.70" lengthAdjust="spacingAndGlyphs" >CAP-NET-E - Drive</text>
<polygon points="2383.85,317.3 2392.55,317.3 2388.2,321.5" fill="#ffffff" />
<rect x="2063" y="336" width="335" height="29" fill="#262626" />
<text x="2165.5" y="356" font-size="12" fill="#ffffff" font-weight="bold" text-anchor="middle" textLength="58.70" lengthAdjust="spacingAndGlyphs" >Parameter</text>
<circle cx="2278.7" cy="351.4" r="4.4" fill="#ffff00"/>
<text x="2297.2" y="356" font-size="12" fill="#ffffff" font-weight="bold" textLength="32.00" lengthAdjust="spacingAndGlyphs" >Axis 1</text>
<text x="2358.3" y="356" font-size="12" fill="#ffffff" font-weight="bold" textLength="28.70" lengthAdjust="spacingAndGlyphs" >Units</text>
<rect x="2063" y="366" width="335" height="24" fill="#262626" />
<rect x="2063" y="366" width="204" height="23" fill="#383838" />
<rect x="2268" y="366" width="79" height="23" fill="#383838" />
<rect x="2348" y="366" width="49" height="23" fill="#383838" />
<text x="2076.3" y="383" font-size="12.5" fill="#ececec" textLength="90.50" lengthAdjust="spacingAndGlyphs" >Current loop rate</text>
<text x="2344" y="383" font-size="12.5" fill="#8c8c8c" text-anchor="end" textLength="33.55" lengthAdjust="spacingAndGlyphs" >20000</text>
<text x="2351" y="383" font-size="12.5" fill="#ececec" textLength="14.75" lengthAdjust="spacingAndGlyphs" >Hz</text>
<polygon points="2401,313 2405.2,306 2409.4,313" fill="#8a8a8a" />
<rect x="2401.3" y="316" width="9" height="66.8" fill="#2a2a2a" rx="4.5"/>
<rect x="2401.3" y="316" width="9" height="49.5" fill="#646464" rx="4.5"/>
<polygon points="2401,386.5 2409.4,386.5 2405.2,393.5" fill="#8a8a8a" />
<rect x="2063" y="401" width="348" height="544" fill="#383838" />
<text x="2072.6" y="417.4" font-size="10.8" fill="#ececec" textLength="33.65" lengthAdjust="spacingAndGlyphs" >Control</text>
<line x1="2391.6" y1="408.1" x2="2400.4" y2="416.9" stroke="#dcdcdc" stroke-width="1.3" />
<line x1="2400.4" y1="408.1" x2="2391.6" y2="416.9" stroke="#dcdcdc" stroke-width="1.3" />
<rect x="2395" y="435.2" width="8.5" height="1.8" fill="#ffffff" />
<rect x="2397.7" y="434" width="3.1" height="1.6" fill="#ffffff" />
<polygon points="2395.9,437.6 2402.6,437.6 2402,444 2396.5,444" fill="#ffffff" />
<rect x="2063" y="453" width="335" height="35" fill="#1e1e1e" />
<text x="2072.8" y="475.1" font-size="11.3" fill="#ececec" textLength="24.01" lengthAdjust="spacingAndGlyphs" >0x01</text>
<text x="2103.2" y="475.1" font-size="11.3" fill="#ffffff" font-weight="bold" textLength="98.70" lengthAdjust="spacingAndGlyphs" >CAP-NET-E - Drive</text>
<polygon points="2383.85,469.9 2392.55,469.9 2388.2,474.1" fill="#ffffff" />
<rect x="2063" y="488" width="335" height="30" fill="#262626" />
<text x="2165.5" y="508.1" font-size="12" fill="#ffffff" font-weight="bold" text-anchor="middle" textLength="58.70" lengthAdjust="spacingAndGlyphs" >Parameter</text>
<circle cx="2278.7" cy="503.5" r="4.4" fill="#ffff00"/>
<text x="2297.2" y="508.1" font-size="12" fill="#ffffff" font-weight="bold" textLength="32.00" lengthAdjust="spacingAndGlyphs" >Axis 1</text>
<text x="2358.3" y="508.1" font-size="12" fill="#ffffff" font-weight="bold" textLength="28.70" lengthAdjust="spacingAndGlyphs" >Units</text>
<rect x="2063" y="518" width="335" height="18" fill="#262626" />
<rect x="2063" y="518" width="335" height="17" fill="#383838" />
<polygon points="2069.85,524.5 2077.35,524.5 2073.6,528.7" fill="#ffffff" />
<text x="2086" y="531" font-size="12.5" fill="#ececec" textLength="84.00" lengthAdjust="spacingAndGlyphs" >Control Buttons</text>
<rect x="2063" y="536" width="335" height="26" fill="#262626" />
<rect x="2063" y="536" width="204" height="25" fill="#383838" />
<rect x="2268" y="536" width="79" height="25" fill="#383838" />
<rect x="2348" y="536" width="49" height="25" fill="#383838" />
<text x="2081.5" y="553" font-size="12.5" fill="#ececec" textLength="27.05" lengthAdjust="spacingAndGlyphs" >Tune</text>
<rect x="2273" y="540" width="70" height="17" fill="#4d4d4d" rx="2.5"/>
<text x="2307.5" y="552.5" font-size="10.8" fill="#ececec" text-anchor="middle" textLength="31.93" lengthAdjust="spacingAndGlyphs" >Enable</text>
<rect x="2063" y="562" width="335" height="26" fill="#262626" />
<rect x="2063" y="562" width="204" height="25" fill="#0078d4" />
<rect x="2268" y="562" width="79" height="25" fill="#0078d4" />
<rect x="2348" y="562" width="49" height="25" fill="#0078d4" />
<text x="2081.5" y="579" font-size="12.5" fill="#ececec" textLength="61.68" lengthAdjust="spacingAndGlyphs" >Fault Reset</text>
<rect x="2273" y="566" width="70" height="17" fill="#4d4d4d" rx="2.5"/>
<text x="2307.5" y="578.5" font-size="10.8" fill="#ececec" text-anchor="middle" textLength="31.93" lengthAdjust="spacingAndGlyphs" >Enable</text>
<rect x="2063" y="588" width="335" height="18" fill="#262626" />
<rect x="2063" y="588" width="335" height="17" fill="#383838" />
<polygon points="2069.85,594.5 2077.35,594.5 2073.6,598.7" fill="#ffffff" />
<text x="2086" y="601" font-size="12.5" fill="#ececec" textLength="39.96" lengthAdjust="spacingAndGlyphs" >Targets</text>
<rect x="2063" y="606" width="335" height="26" fill="#262626" />
<rect x="2063" y="606" width="204" height="25" fill="#383838" />
<rect x="2268" y="606" width="79" height="25" fill="#383838" />
<rect x="2348" y="606" width="49" height="25" fill="#383838" />
<text x="2081.5" y="623" font-size="12.5" fill="#ececec" textLength="86.49" lengthAdjust="spacingAndGlyphs" >Operation mode</text>
<text x="2344" y="623" font-size="12.5" fill="#ececec" text-anchor="end" textLength="40.21" lengthAdjust="spacingAndGlyphs" >Current</text>
<text x="2351" y="623" font-size="12.5" fill="#ececec" >-</text>
<rect x="2063" y="632" width="335" height="18" fill="#262626" />
<rect x="2063" y="632" width="335" height="17" fill="#383838" />
<polygon points="2069.85,638.5 2077.35,638.5 2073.6,642.7" fill="#ffffff" />
<text x="2086" y="645" font-size="12.5" fill="#ececec" textLength="65.72" lengthAdjust="spacingAndGlyphs" >Control loop</text>
<rect x="2063" y="650" width="335" height="26" fill="#262626" />
<rect x="2063" y="650" width="204" height="25" fill="#383838" />
<rect x="2268" y="650" width="79" height="25" fill="#383838" />
<rect x="2348" y="650" width="49" height="25" fill="#383838" />
<text x="2081.5" y="667" font-size="12.5" fill="#ececec" textLength="117.32" lengthAdjust="spacingAndGlyphs" >Current direct loop Kp</text>
<text x="2344" y="667" font-size="12.5" fill="#ececec" text-anchor="end" textLength="50.32" lengthAdjust="spacingAndGlyphs" >7.764432</text>
<text x="2351" y="667" font-size="12.5" fill="#ececec" textLength="19.45" lengthAdjust="spacingAndGlyphs" >V/A</text>
<rect x="2063" y="676" width="335" height="26" fill="#262626" />
<rect x="2063" y="676" width="204" height="25" fill="#383838" />
<rect x="2268" y="676" width="79" height="25" fill="#383838" />
<rect x="2348" y="676" width="49" height="25" fill="#383838" />
<text x="2081.5" y="693" font-size="12.5" fill="#ececec" textLength="113.30" lengthAdjust="spacingAndGlyphs" >Current direct loop Ki</text>
<text x="2344" y="693" font-size="12.5" fill="#ececec" text-anchor="end" textLength="63.74" lengthAdjust="spacingAndGlyphs" >468.484741</text>
<text x="2351" y="693" font-size="12.5" fill="#ececec" textLength="14.75" lengthAdjust="spacingAndGlyphs" >Hz</text>
<rect x="2063" y="702" width="335" height="26" fill="#262626" />
<rect x="2063" y="702" width="204" height="25" fill="#383838" />
<rect x="2268" y="702" width="79" height="25" fill="#383838" />
<rect x="2348" y="702" width="49" height="25" fill="#383838" />
<text x="2081.5" y="719" font-size="12.5" fill="#ececec" textLength="146.17" lengthAdjust="spacingAndGlyphs" >Current quadrature loop Kp</text>
<text x="2344" y="719" font-size="12.5" fill="#ececec" text-anchor="end" textLength="50.32" lengthAdjust="spacingAndGlyphs" >7.764432</text>
<text x="2351" y="719" font-size="12.5" fill="#ececec" textLength="19.45" lengthAdjust="spacingAndGlyphs" >V/A</text>
<rect x="2063" y="728" width="335" height="26" fill="#262626" />
<rect x="2063" y="728" width="204" height="25" fill="#383838" />
<rect x="2268" y="728" width="79" height="25" fill="#383838" />
<rect x="2348" y="728" width="49" height="25" fill="#383838" />
<text x="2081.5" y="745" font-size="12.5" fill="#ececec" textLength="142.14" lengthAdjust="spacingAndGlyphs" >Current quadrature loop Ki</text>
<text x="2344" y="745" font-size="12.5" fill="#ececec" text-anchor="end" textLength="63.74" lengthAdjust="spacingAndGlyphs" >468.484741</text>
<text x="2351" y="745" font-size="12.5" fill="#ececec" textLength="14.75" lengthAdjust="spacingAndGlyphs" >Hz</text>
<rect x="2063" y="754" width="335" height="26" fill="#262626" />
<rect x="2063" y="754" width="204" height="25" fill="#383838" />
<rect x="2268" y="754" width="79" height="25" fill="#383838" />
<rect x="2348" y="754" width="49" height="25" fill="#383838" />
<text x="2081.5" y="771" font-size="12.5" fill="#ececec" textLength="148.81" lengthAdjust="spacingAndGlyphs" >Current direct loop max. out</text>
<text x="2344" y="771" font-size="12.5" fill="#ececec" text-anchor="end" textLength="16.77" lengthAdjust="spacingAndGlyphs" >4.0</text>
<text x="2351" y="771" font-size="12.5" fill="#ececec" >V</text>
<rect x="2063" y="780" width="335" height="26" fill="#262626" />
<rect x="2063" y="780" width="204" height="25" fill="#383838" />
<rect x="2268" y="780" width="79" height="25" fill="#383838" />
<rect x="2348" y="780" width="49" height="25" fill="#383838" />
<text x="2081.5" y="797" font-size="12.5" fill="#ececec" textLength="145.46" lengthAdjust="spacingAndGlyphs" >Current direct loop min. out</text>
<text x="2344" y="797" font-size="12.5" fill="#ececec" text-anchor="end" textLength="20.78" lengthAdjust="spacingAndGlyphs" >-2.0</text>
<text x="2351" y="797" font-size="12.5" fill="#ececec" >V</text>
<rect x="2063" y="806" width="335" height="26" fill="#262626" />
<rect x="2063" y="806" width="204" height="25" fill="#383838" />
<rect x="2268" y="806" width="79" height="25" fill="#383838" />
<rect x="2348" y="806" width="49" height="25" fill="#383838" />
<text x="2081.5" y="823" font-size="12.5" fill="#ececec" textLength="177.65" lengthAdjust="spacingAndGlyphs" >Current quadrature loop max. out</text>
<text x="2344" y="823" font-size="12.5" fill="#ececec" text-anchor="end" textLength="16.77" lengthAdjust="spacingAndGlyphs" >4.0</text>
<text x="2351" y="823" font-size="12.5" fill="#ececec" >V</text>
<rect x="2063" y="832" width="335" height="26" fill="#262626" />
<rect x="2063" y="832" width="204" height="25" fill="#383838" />
<rect x="2268" y="832" width="79" height="25" fill="#383838" />
<rect x="2348" y="832" width="49" height="25" fill="#383838" />
<text x="2081.5" y="849" font-size="12.5" fill="#ececec" textLength="174.30" lengthAdjust="spacingAndGlyphs" >Current quadrature loop min. out</text>
<text x="2344" y="849" font-size="12.5" fill="#ececec" text-anchor="end" textLength="20.78" lengthAdjust="spacingAndGlyphs" >-2.0</text>
<text x="2351" y="849" font-size="12.5" fill="#ececec" >V</text>
<rect x="2063" y="858" width="335" height="18" fill="#262626" />
<rect x="2063" y="858" width="335" height="17" fill="#383838" />
<polygon points="2069.85,864.5 2077.35,864.5 2073.6,868.7" fill="#ffffff" />
<text x="2086" y="871" font-size="12.5" fill="#ececec" textLength="31.82" lengthAdjust="spacingAndGlyphs" >Limits</text>
<rect x="2063" y="876" width="335" height="26" fill="#262626" />
<rect x="2063" y="876" width="204" height="25" fill="#383838" />
<rect x="2268" y="876" width="79" height="25" fill="#383838" />
<rect x="2348" y="876" width="49" height="25" fill="#383838" />
<text x="2081.5" y="893" font-size="12.5" fill="#ececec" textLength="67.01" lengthAdjust="spacingAndGlyphs" >Max. current</text>
<text x="2344" y="893" font-size="12.5" fill="#ececec" text-anchor="end" textLength="16.77" lengthAdjust="spacingAndGlyphs" >0.5</text>
<text x="2351" y="893" font-size="12.5" fill="#ececec" >A</text>
<polygon points="2401,465.3 2405.2,458.3 2409.4,465.3" fill="#8a8a8a" />
<rect x="2401.3" y="468.6" width="9" height="455" fill="#2a2a2a" rx="4.5"/>
<rect x="2401.3" y="468.6" width="9" height="433" fill="#646464" rx="4.5"/>
<polygon points="2401,927.6 2409.4,927.6 2405.2,934.6" fill="#8a8a8a" />
<rect x="2066.5" y="748.3" width="348" height="155.2" fill="none" stroke="#ff0000" stroke-width="5"/>
<rect x="33.5" y="26.5" width="322" height="47.5" fill="#ffffff" stroke="#000000" stroke-width="1"/>
<text x="194.5" y="57.5" font-size="21" fill="#000000" text-anchor="middle" >Current Amplitude = 1A</text>
<rect x="44.5" y="393.5" width="322" height="47.2" fill="#ffffff" stroke="#000000" stroke-width="1"/>
<text x="205.5" y="424.5" font-size="21" fill="#000000" text-anchor="middle" >Voltage direct = 15V</text>
<rect x="1585.5" y="26.5" width="322" height="47.5" fill="#ffffff" stroke="#000000" stroke-width="1"/>
<text x="1746.5" y="57.5" font-size="21" fill="#000000" text-anchor="middle" >Current Amplitude = 0.5A</text>
<rect x="1250.5" y="705.7" width="322" height="47.1" fill="#ffffff" stroke="#000000" stroke-width="1"/>
<text x="1411.5" y="736.7" font-size="21" fill="#000000" text-anchor="middle" >Voltage direct = 4 V</text>
<rect x="1745" y="913.3" width="322.5" height="47.7" fill="#ffffff" stroke="#000000" stroke-width="1"/>
<text x="1906.25" y="944.3" font-size="21" fill="#000000" text-anchor="middle" >Voltage direct = -2 V</text>
<polygon points="112.22,163.89 184.33,91.27 191.61,98.49 194,75.5 171.03,78.06 178.3,85.28 106.18,157.91" fill="#10e5e8" />
<polygon points="243.45,521.15 216.74,457.84 225.96,453.95 205.6,443 199.23,465.22 208.45,461.33 235.15,524.65" fill="#6fd700" />
<polygon points="1103.4,472.3 1293.6,472.3 1293.6,462.6 1311,477 1293.6,491.6 1293.6,481.7 1103.4,481.7" fill="#ff0000" />
<polygon points="1670.01,213.64 1730.85,94.08 1739.76,98.62 1735,76 1713.91,85.47 1722.83,90 1661.99,209.56" fill="#10e5e8" />
<polygon points="2075.5,886.18 1623.3,324.99 1631.08,318.72 1608.5,313.8 1608.5,336.91 1616.29,330.64 2068.5,891.82" fill="#10e5e8" />
<polygon points="1599.29,517.85 1442.87,687.91 1435.51,681.14 1434,704.2 1456.86,700.77 1449.5,694 1605.91,523.95" fill="#6fd700" />
<polygon points="2071.88,761.01 1624.54,528.12 1629.16,519.25 1606.5,523.8 1615.77,544.97 1620.39,536.1 2067.72,768.99" fill="#6fd700" />
<polygon points="2045.13,760.65 1764.14,857.86 1760.87,848.41 1748.6,868 1770.35,875.82 1767.08,866.37 2048.07,769.15" fill="#6fd700" />
<polygon points="1746.9,878.17 1828.64,911.56 1824.85,920.82 1847,914.2 1835.82,893.97 1832.04,903.23 1750.3,869.83" fill="#6fd700" />
</svg></body></html>
